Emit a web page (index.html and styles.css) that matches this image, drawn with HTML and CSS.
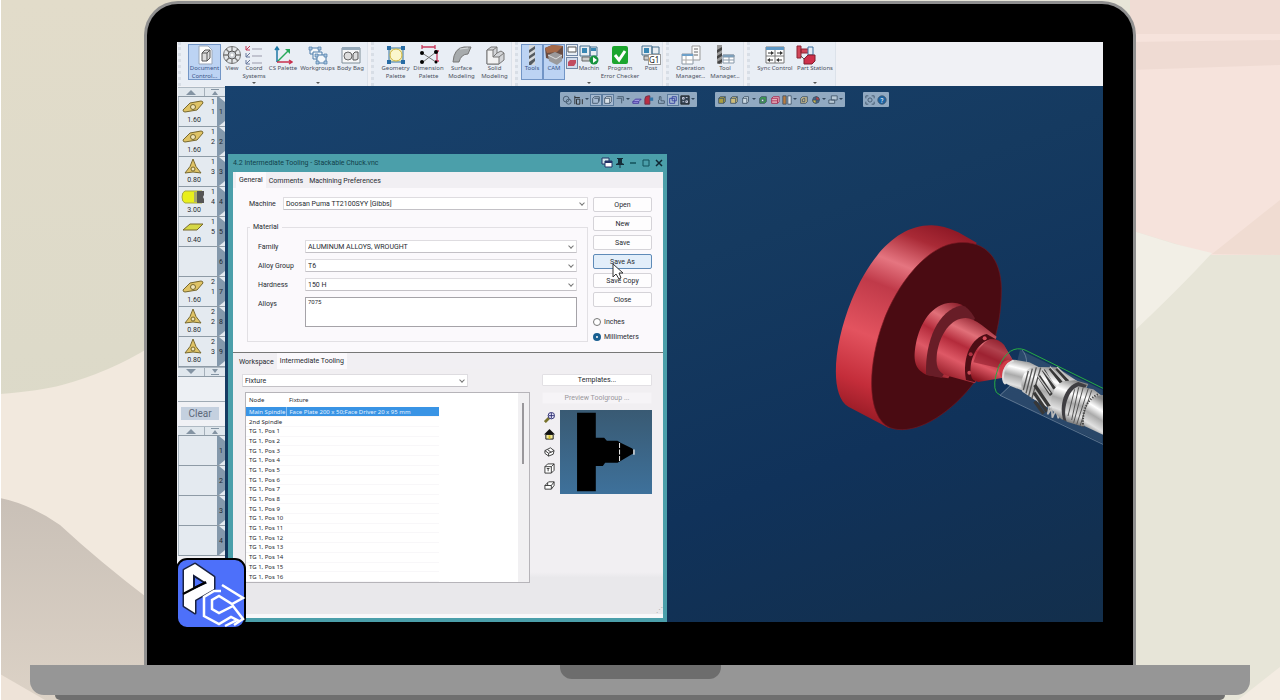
FILE: index.html
```html
<!DOCTYPE html>
<html lang="en">
<head>
<meta charset="utf-8">
<title>Intermediate Tooling</title>
<link rel="stylesheet" href="styles.css">
</head>
<body>
<svg class="backdrop" viewBox="0 0 1280 700" preserveAspectRatio="none" aria-hidden="true">
  <defs>
    <linearGradient id="olive" x1="0" y1="0" x2="0" y2="1"><stop offset="0" stop-color="#e2dcca"/><stop offset="1" stop-color="#d8d8c8"/></linearGradient>
    <linearGradient id="stone" x1="0" y1="0" x2="0" y2="1"><stop offset="0" stop-color="#c9c0b7"/><stop offset="1" stop-color="#dcd2c6"/></linearGradient>
  </defs>
  <rect width="640" height="700" fill="url(#olive)"/>
  <path d="M0 394 Q40 391 62 385 Q110 372 150 347 V620 H0Z" fill="#f2e9de"/>
  <path d="M0 498 Q30 504 60 525 Q100 562 150 600 V700 H0Z" fill="url(#stone)"/>
  <path d="M0 674 L45 700 H0Z" fill="#eee3d8"/>
  <rect width="1" height="700" fill="#fff"/>
  <rect x="640" width="640" height="700" fill="#e7e5d8"/>
  <path d="M1130 0H1280V255H1212L1130 230Z" fill="#f6e3dc"/>
  <path d="M1130 0H1280V34H1130Z" fill="#f0dcd4"/>
  <path d="M1130 42L1280 40V65L1130 70Z" fill="#efdbd3"/>
  <path d="M1212 254L1280 200V255Z" fill="#f0dcd2"/>
  <path d="M1130 230L1175 244L1212 253Q1180 288 1130 335Z" fill="#f2efe6"/>
  <path d="M1238 700L1280 667V700Z" fill="#f3ece2"/>
</svg>

<main class="laptop">
<div class="lid">
<div class="screen">

<header class="ribbon">
  <div class="group first">
    <button class="tool md on"><svg viewBox="0 0 20 20"><path d="M4 1h9l4 4v14H4z" fill="#fff" stroke="#9aa7b8"/><path d="M7 8l3-3h5v8l-3 3H7zM7 8h5v8M12 8l3-3" fill="#ddd" stroke="#555"/></svg><span>Document Control...</span></button>
    <button class="tool sm"><svg viewBox="0 0 20 20"><circle cx="10" cy="10" r="8.500" fill="#e4e7ea" stroke="#777"/><circle cx="10" cy="10" r="4" fill="#c9cdd2" stroke="#555"/><circle cx="10" cy="10" r="1.500" fill="#fff"/><path d="M10 1v5M10 14v5M1 10h5M14 10h5M4 4l3 3M16 4l-3 3M4 16l3-3M16 16l-3-3" stroke="#777" stroke-width="1.300"/></svg><span>View</span></button>
    <button class="tool sm drop"><svg viewBox="0 0 20 20"><path d="M2 1v4h4M2 5l4-4" stroke="#c33653" fill="none"/><path d="M2 8v4h4M2 12l4-4M2 15v4h4M2 19l4-4" stroke="#68799d" fill="none"/><path d="M8 4h10M8 11h10M8 18h10" stroke="#99a"/></svg><span>Coord<br>Systems</span></button>
    <button class="tool lg"><svg viewBox="0 0 20 20"><path d="M4 17L16 5" stroke="#27a85b" stroke-width="1.5"/><path d="M12 4h5v5z" fill="#27a85b"/><path d="M4 17V2M2 5l2-3 2 3" stroke="#1c77a5" fill="none" stroke-width="1.5"/><path d="M4 17h15M16 15l3 2-3 2" stroke="#c8314f" fill="none" stroke-width="1.5"/></svg><span>CS Palette</span></button>
    <button class="tool md drop"><svg viewBox="0 0 20 20" fill="#f5f8fb" stroke="#4d7caa"><path d="M2 3h9v6H2z"/><path d="M5 7h9v7H5z"/><path d="M9 10h9v8H9z" /><path d="M1 2h3v3H1zM10 2h3v3h-3zM7 9h3v3H7zM16 9h3v3h-3zM8 16h3v3H8zM16 16h3v3h-3z" fill="#a8c5df" stroke-width=".7"/></svg><span>Workgroups</span></button>
    <button class="tool md"><svg viewBox="0 0 20 20"><path d="M1 3h18v15H1z" fill="#f6f7f8" stroke="#7f8d98"/><path d="M1 2h18v3H1z" fill="#94a8b9"/><circle cx="7" cy="11" r="4" fill="#ddd" stroke="#666"/><path d="M12 9l2-2h3v7l-2 1h-3z" fill="#ddd" stroke="#555"/></svg><span>Body Bag</span></button>
  </div>
  <div class="group">
    <button class="tool md"><svg viewBox="0 0 20 20"><rect x="3" y="3" width="14" height="14" fill="#e3e5bf" stroke="#3976aa"/><circle cx="10" cy="10" r="6" fill="#fbf6cc" stroke="#d3b63b"/><path d="M1 1h4v4H1zM15 1h4v4h-4zM1 15h4v4H1zM15 15h4v4h-4z" fill="#286ca4"/></svg><span>Geometry Palette</span></button>
    <button class="tool md"><svg viewBox="0 0 20 20"><path d="M3 2h13M3 0v4M16 0v4M18 6v10M16 6h4M16 16h4" stroke="#c7385a" stroke-width="1.3"/><path d="M17 7L4 17M3 8L17 17" stroke="#777" fill="none"/><circle cx="17" cy="7" r="2"/><circle cx="3" cy="8" r="2"/><circle cx="3" cy="17" r="2"/><circle cx="17" cy="17" r="1.500"/></svg><span>Dimension Palette</span></button>
    <button class="tool md"><svg viewBox="0 0 20 20"><path d="M1 17Q2 3 12 2H19L16 9Q9 9 7 17Z" fill="#a7abad" stroke="#777"/><path d="M8 4L16 3" stroke="#d9dcdf"/></svg><span>Surface Modeling</span></button>
    <button class="tool md"><svg viewBox="0 0 20 20" stroke="#777"><path d="M2 5l4-3h6v6l4-2 3 2v7l-5 4H2z" fill="#d3d5d8"/><path d="M2 5h6v7h6v7H2zM8 5l4-3M14 12l5-4M8 12l4-4" fill="#f2f2f2"/></svg><span>Solid Modeling</span></button>
  </div>
  <div class="group tight">
    <button class="tool sm on"><svg viewBox="0 0 20 20"><path d="M7 0h6v20H7z" fill="#d5d8db"/><path d="M7 5l6-4v3l-6 4zM7 11l6-4v3l-6 4zM7 17l6-4v3l-4 4H7z" fill="#555b61"/></svg><span>Tools</span></button>
    <button class="tool sm on"><svg viewBox="0 0 20 20"><path d="M1 3l7-3 11 1v12l-5 4-12-4z" fill="#694c42"/><path d="M1 3l7-3 11 1-6 6-10 1z" fill="#a56949"/><path d="M4 10l7-3 7 3v6l-5 4-8-4z" fill="#9b9a9c"/><path d="M4 10l8 4 6-4" stroke="#ddd" fill="none"/></svg><span>CAM</span></button>
    <div class="mini">
      <button aria-label="Setup view"><svg viewBox="0 0 12 12"><rect x=".5" y=".5" width="11" height="11" fill="#e7edf4" stroke="#7187a6"/><path d="M2 3h8v5H2z" fill="#fff" stroke="#555"/></svg></button>
      <button aria-label="Part view"><svg viewBox="0 0 12 12"><rect x=".5" y=".5" width="11" height="11" fill="#d3dcec" stroke="#7187a6"/><path d="M2 5l2-2h6v3L8 9H2z" fill="#c24c60"/></svg></button>
    </div>
    <button class="tool sm drop"><svg viewBox="0 0 20 20"><path d="M1 1h10v10H1zM11 2h7v9h-7z" fill="#e8edf2" stroke="#46718f"/><path d="M3 3h5v5H3zM12 3h5v3h-5z" fill="#3987b4"/><path d="M3 12h8v4H3z" fill="#ccc" stroke="#666"/><circle cx="15" cy="15" r="4.500" fill="#17933e"/><path d="M14 12l4 3-4 3z" fill="#fff"/></svg><span>Machin</span></button>
    <button class="tool xl"><svg viewBox="0 0 20 20"><rect x="2" y="1" width="16" height="18" rx="2" fill="#1ba52e"/><path d="M5 10l4 5 6-9" stroke="#fff" stroke-width="3" fill="none"/></svg><span>Program<br>Error Checker</span></button>
    <button class="tool sm"><svg viewBox="0 0 20 20"><path d="M1 1h10v9H1zM11 2h7v7h-7z" fill="#e8edf2" stroke="#46718f"/><path d="M3 3h5v5H3z" fill="#3987b4"/><path d="M3 11h5v4H3z" fill="#ccc" stroke="#666"/><rect x="7.500" y="9.500" width="12" height="10" fill="#fff" stroke="#999"/><text x="8" y="18" font-size="8" fill="#222">G1</text></svg><span>Post</span></button>
  </div>
  <div class="group">
    <button class="tool md"><svg viewBox="0 0 20 20"><path d="M11 1h8v14h-8z" fill="#fafafa" stroke="#999"/><path d="M13 4h4M13 7h4M13 10h4" stroke="#666"/><path d="M1 9h11v10H1z" fill="#fff" stroke="#8a97a4"/><path d="M1 9h11v2H1z" fill="#6da0c9"/><path d="M5 11v8M1 15h11" stroke="#aaa"/></svg><span>Operation Manager...</span></button>
    <button class="tool lg"><svg viewBox="0 0 20 20"><path d="M2 0h5v19H2z" fill="#999"/><path d="M2 5l5-3v3l-5 3zM2 11l5-3v3l-5 3zM2 17l5-3v3l-3 2z" fill="#444"/><path d="M8 10h11v8H8z" fill="#fff" stroke="#89a"/><path d="M8 10h11v2H8zM14 12v6M8 15h11" stroke="#89a" fill="#71a4cb"/></svg><span>Tool<br>Manager...</span></button>
  </div>
  <div class="group">
    <button class="tool xl"><svg viewBox="0 0 20 20"><path d="M1 2h18v16H1z" fill="#fff" stroke="#777"/><path d="M1 2h18v3H1z" fill="#5f99c6"/><path d="M10 5v13M1 11h18" stroke="#777"/><path d="M3 8h4M12 8h4M4 15h4M13 15h4" stroke="#333"/><path d="M6 6l3 2-3 2zM15 6l3 2-3 2zM5 13l-3 2 3 2zM14 13l-3 2 3 2z" fill="#333"/></svg><span>Sync Control</span></button>
    <button class="tool xl drop stations"><svg viewBox="0 0 20 20"><path d="M1 1h4v12H1zM5 4h8v4H5z" fill="#d14658" stroke="#8d2434"/><path d="M12 2h5v8h-5z" fill="#e5ecf4" stroke="#3b70a0"/><path d="M8 14l4-4h7v6l-3 3H8z" fill="#cf304a" stroke="#7f1e2e"/><path d="M5 11l3 3" stroke="#555"/></svg><span>Part Stations</span></button>
  </div>
</header>

<div class="workspace">
  <aside class="rail">
    <div class="scroller"><button aria-label="Scroll up"><svg viewBox="0 0 12 6"><path d="M1 6l5-5 5 5z"/></svg></button><button aria-label="To top"><svg viewBox="0 0 12 6"><path d="M2 0h8v1H2zM3 6l3-4 3 4z"/></svg></button></div>
    <ol class="slots">
      <li><svg viewBox="0 0 24 16" class="insert"><path d="M2 11L9 4 20 2q2 0 2 2l-6 7-12 2q-2 0-2-2z"/><circle cx="12" cy="8" r="2.500"/></svg><b>1.60</b><i>1<br>1</i><em>1</em></li>
      <li><svg viewBox="0 0 24 16" class="insert"><path d="M2 11L9 4 20 2q2 0 2 2l-6 7-12 2q-2 0-2-2z"/><circle cx="12" cy="8" r="2.500"/></svg><b>1.60</b><i>1<br>2</i><em>2</em></li>
      <li><svg viewBox="0 0 24 16" class="insert"><path d="M12 0q2 8 8 14-8-2-16 0 6-6 8-14z"/><circle cx="12" cy="10" r="2"/></svg><b>0.80</b><i>1<br>3</i><em>3</em></li>
      <li><svg viewBox="0 0 24 16" class="insert"><path d="M4 2h17v12H4q-3-1-3-6t3-6z" fill="#e9ef1b" stroke="#a7aa42"/><path d="M16 2h7v4l-1 2 1 2v4h-7z" fill="#555" stroke="none"/><path d="M13 3h3v10h-3z" fill="#a9aa6f" stroke="none"/></svg><b>3.00</b><i>1<br>4</i><em>4</em></li>
      <li><svg viewBox="0 0 24 16" class="insert"><path d="M2 11l7-6h13l-6 6z" fill="#d5d745"/></svg><b>0.40</b><i>1<br>5</i><em>5</em></li>
      <li><em>6</em></li>
      <li><svg viewBox="0 0 24 16" class="insert"><path d="M2 11L9 4 20 2q2 0 2 2l-6 7-12 2q-2 0-2-2z"/><circle cx="12" cy="8" r="2.500"/></svg><b>1.60</b><i>2<br>1</i><em>7</em></li>
      <li><svg viewBox="0 0 24 16" class="insert"><path d="M12 0q2 8 8 14-8-2-16 0 6-6 8-14z"/><circle cx="12" cy="10" r="2"/></svg><b>0.80</b><i>2<br>2</i><em>8</em></li>
      <li><svg viewBox="0 0 24 16" class="insert"><path d="M12 0q2 8 8 14-8-2-16 0 6-6 8-14z"/><circle cx="12" cy="10" r="2"/></svg><b>0.80</b><i>2<br>3</i><em>9</em></li>
    </ol>
    <div class="scroller"><button aria-label="Scroll down"><svg viewBox="0 0 12 6"><path d="M1 0l5 5 5-5z"/></svg></button><button aria-label="To bottom"><svg viewBox="0 0 12 6"><path d="M2 5h8v1H2zM3 0l3 4 3-4z"/></svg></button></div>
    <div class="spare"></div>
    <div class="clear"><button>Clear</button></div>
    <div class="scroller"><button aria-label="Operations up"><svg viewBox="0 0 12 6"><path d="M1 6l5-5 5 5z"/></svg></button><button aria-label="Operations to top"><svg viewBox="0 0 12 6"><path d="M2 0h8v1H2zM3 6l3-4 3 4z"/></svg></button></div>
    <ol class="slots"><li><em>1</em></li><li><em>2</em></li><li><em>3</em></li><li><em>4</em></li></ol>
  </aside>

  <section class="canvas">
    <div class="floatbars">
      <div class="bar">
        <svg viewBox="0 0 12 12"><circle cx="5" cy="5" r="3.500"/><circle cx="8" cy="8" r="3"/></svg>
        <svg viewBox="0 0 12 12"><path d="M1 1v10M1 3h6M3 5h4v6H3zM10 5v6" stroke="#222"/></svg><s></s>
        <svg viewBox="0 0 12 12" class="sel"><path d="M2 4l2-2h6v5l-2 3H2zM4 4h5v4"/></svg>
        <svg viewBox="0 0 12 12" class="sel"><path d="M2 4l2-2h6v6l-2 2H2zM2 4h6v6" fill="#dce3ea"/></svg>
        <svg viewBox="0 0 12 12"><path d="M2 4h6v6M3 2h7v5"/></svg><s></s>
        <svg viewBox="0 0 12 12"><path d="M1 8l3-3h7L8 8zM1 8v2h7V8" fill="#a09ae0" stroke="#40309a"/></svg>
        <svg viewBox="0 0 12 12"><path d="M1 11V5q0-4 4-4h2v10z" fill="#b92d43" stroke="#67304a"/><path d="M7 3h4v4H7z" fill="#3474a7" stroke="none"/></svg>
        <svg viewBox="0 0 12 12"><path d="M3 6v4h7V7H6V2H4v4"/></svg>
        <svg viewBox="0 0 12 12" class="sel"><path d="M2 4h6v6H2zM5 2h5v5H5z" stroke="#303f9f"/></svg>
        <svg viewBox="0 0 12 12"><path d="M1 1h10v10H1z" fill="#344454" stroke="#222"/><path d="M3 3h2v2H3zM7 3h2M3 8h2M7 7h2v2H7z" stroke="#dde"/></svg><s></s>
      </div>
      <div class="bar">
        <svg viewBox="0 0 12 12"><path d="M2 4l2-2h6v6l-2 2H2z" fill="#a99d43"/><path d="M2 4h6v6M8 4l2-2"/></svg>
        <svg viewBox="0 0 12 12"><path d="M2 4l2-2h6v6l-2 2H2z" fill="#cdbd7b"/><path d="M2 4h6v6M8 4l2-2"/></svg>
        <svg viewBox="0 0 12 12"><path d="M2 4l2-2h5v6l-2 2H2zM2 4h5v6" fill="#cbd9e3"/></svg><s></s>
        <svg viewBox="0 0 12 12"><path d="M2 4l2-2h6v6l-2 2H2z" fill="#3d9b51"/><path d="M4 5h3v3H4z" fill="#dfe"/></svg>
        <svg viewBox="0 0 12 12"><path d="M2 4l2-2h7v6l-2 2H2zM2 4h7v6M2 7h7" fill="#e4b1bd" stroke="#a7274d"/></svg>
        <svg viewBox="0 0 12 12"><path d="M1 1h4v10H1z" fill="#b87c41"/><path d="M7 1h4v10H7z" fill="#dce5ee"/></svg><s></s>
        <svg viewBox="0 0 12 12"><path d="M2 4l2-2h6v6l-2 2H2zM4 5l3-1v4H4z" fill="#c5b78b"/></svg>
        <svg viewBox="0 0 12 12"><circle cx="6" cy="6" r="4" fill="#45658a"/><path d="M6 2a4 4 0 0 1 4 4H6z" fill="#c54043"/><path d="M2 6h4v4a4 4 0 0 1-4-4z" fill="#d0b94a"/></svg><s></s>
        <svg viewBox="0 0 12 12"><path d="M4 1h7v5H4zM1 6h7v4H1z" fill="#b8c9d6"/></svg><s></s>
      </div>
      <div class="bar">
        <svg viewBox="0 0 12 12"><path d="M1 4V1h3M8 1h3v3M11 8v3H8M4 11H1V8"/><circle cx="6" cy="6" r="2.500"/></svg>
        <svg viewBox="0 0 12 12"><circle cx="6" cy="6" r="5" fill="#1b64a5"/><text x="4" y="9" font-size="8" fill="#fff" stroke="none">?</text></svg>
      </div>
    </div>

    <svg class="model" viewBox="0 0 849 750" role="img" aria-label="Red stackable chuck with shaft">
      <defs>
        <linearGradient id="rim" gradientUnits="userSpaceOnUse" x1="350" y1="40" x2="110" y2="640"><stop offset="0" stop-color="#8f1926"/><stop offset=".1" stop-color="#a92a36"/><stop offset=".24" stop-color="#e57580"/><stop offset=".36" stop-color="#c03a49"/><stop offset=".6" stop-color="#e3535f"/><stop offset=".82" stop-color="#c42d3a"/><stop offset="1" stop-color="#8e1721"/></linearGradient>
        <linearGradient id="hub" x1=".7" y1="0" x2=".25" y2="1"><stop offset="0" stop-color="#8d202c"/><stop offset=".25" stop-color="#e17079"/><stop offset=".45" stop-color="#b42b3b"/><stop offset=".68" stop-color="#de5966"/><stop offset="1" stop-color="#8c1621"/></linearGradient>
        <linearGradient id="steel" x1=".6" y1="0" x2=".3" y2="1"><stop offset="0" stop-color="#888"/><stop offset=".28" stop-color="#fff"/><stop offset=".5" stop-color="#aaa"/><stop offset=".75" stop-color="#e2e2e2"/><stop offset="1" stop-color="#666"/></linearGradient>
      </defs>
      <path d="M335 46C225 45 145 150 95 270C40 405 28 555 85 590L205 653L250 658L470 98L415 67Q370 46 335 46Z" fill="url(#rim)"/>
      <path d="M415 98C320 105 230 225 190 335C145 455 135 620 210 653C270 675 360 635 440 545C500 478 545 370 544 235C543 150 500 91 415 98Z" fill="#4a0b12" stroke="#721720" stroke-width="2"/>
      <path d="M395 278C335 280 300 340 288 400C276 460 290 480 320 495L385 505L470 345L425 284Q410 277 395 278Z" fill="url(#hub)"/>
      <path d="M425 286C355 301 315 390 318 494L365 504L465 325Q445 290 425 286Z" fill="#681d27"/>
      <path d="M430 325C385 330 355 385 350 440C347 475 360 491 385 498L465 520L530 380L485 345Q450 320 430 325Z" fill="url(#hub)"/>
      <path d="M500 372C455 383 425 440 438 510L465 517L528 388Z" fill="#4d0d15"/>
      <circle cx="494" cy="385" r="6" fill="#d54d5b"/><circle cx="452" cy="433" r="6" fill="#ad3141"/><circle cx="448" cy="488" r="6" fill="#c84955"/>
      <path d="M510 388C470 400 446 450 453 495Q455 512 475 516L550 503L583 458L552 405Q535 385 510 388Z" fill="url(#hub)"/>
      <path d="M510 388Q530 380 552 405L583 458Q552 440 536 474L460 457Q475 405 510 388Z" fill="#8b1c29" opacity=".55"/>
      <path d="M583 458L549 503Q534 500 540 475Q550 453 565 450Z" fill="#d13a47"/>
      <path d="M600 420L575 520L540 556L848 700V540Z" fill="#788b9e" opacity=".25"/>
      <path d="M606 420Q620 435 620 460M540 556L578 520M540 556L849 703" stroke="#8295ab" stroke-width="2" fill="none"/>
      <path d="M584 449C555 455 540 490 550 517L570 527L634 553L668 477L628 457Z" fill="url(#steel)"/>
      <path d="M581 451Q549 466 549 500Q549 516 557 522" stroke="#ddd" stroke-width="6" fill="none"/>
      <path d="M646 471C614 470 598 510 607 545L660 580L735 620L775 515L709 472Z" fill="url(#steel)"/>
      <path d="M625 483L610 540M637 476L618 550M649 472L626 558M662 473L635 567" stroke="#555" stroke-width="4"/>
      <path d="M656 498L694 555M670 480L704 536M690 475L729 524M710 475L744 514M644 525L688 590M642 548L681 605M644 574L671 611" stroke="#383838" stroke-width="10"/>
      <path d="M650 493L691 550M667 477L709 532M690 470L734 518M711 471L747 508" stroke="#c8c8c8" stroke-width="4"/>
      <path d="M688 588l-5 25 12-18 2 28 11-25 7 27 5-26 10 20" fill="none" stroke="#b9b9b9" stroke-width="5"/>
      <path d="M735 513C700 520 686 575 696 600L724 628L750 635L805 522L765 511Z" fill="url(#steel)"/>
      <path d="M775 516C732 528 716 589 730 630L749 637L800 525Z" fill="#3f3e42"/>
      <path d="M775 529C742 540 727 605 740 635L790 650L849 560L820 538Z" fill="url(#steel)"/>
      <path d="M764 538L744 618M776 532L755 630M790 531L761 638M805 535L770 644M815 541L780 648" stroke="#555" stroke-width="3"/>
      <path d="M849 555C808 556 786 600 793 648L849 674Z" fill="url(#steel)"/>
      <path d="M834 553Q785 575 789 650" stroke="#444" stroke-width="6" stroke-dasharray="4 4" fill="none"/>
      <path d="M849 535L615 420Q568 402 536 470Q516 524 529 547L540 555" stroke="#27ad43" stroke-width="3" fill="none"/>
    </svg>

    <section class="dialog" aria-label="Intermediate Tooling">
      <header class="title"><h1>4.2 Intermediate Tooling - Stackable Chuck.vnc</h1>
        <svg viewBox="0 0 12 12"><path d="M1 1h7v6H1z" fill="#cce4e8" stroke="#236"/><path d="M4 4h7v6H4z" fill="#fff" stroke="#236"/><path d="M4 4h7v2H4z" fill="#236"/></svg>
        <svg viewBox="0 0 12 12"><path d="M3 1h6v1H8v4l2 1v1H6.500v3h-1V8H2V7l2-1V2H3z" fill="#142c38"/></svg>
        <button aria-label="Minimize"><svg viewBox="0 0 12 12"><path d="M3 6h6" stroke="#12515a" stroke-width="1.500"/></svg></button>
        <button aria-label="Maximize"><svg viewBox="0 0 12 12"><path d="M3 3h6v6H3z" fill="none" stroke="#12515a"/></svg></button>
        <button aria-label="Close dialog"><svg viewBox="0 0 12 12"><path d="M3 3l6 6M9 3l-6 6" stroke="#102733" stroke-width="1.500"/></svg></button>
      </header>
      <div class="pane">
        <nav class="tabs"><button class="active">General</button><button>Comments</button><button>Machining Preferences</button></nav>
        <form class="general">
          <div class="fields">
            <div class="field machine"><label for="machine">Machine</label><div class="pick"><select id="machine"><option>Doosan Puma TT2100SYY [Gibbs]</option></select></div></div>
            <fieldset><legend>Material</legend>
              <div class="field"><label for="family">Family</label><div class="pick"><select id="family"><option>ALUMINUM ALLOYS, WROUGHT</option></select></div></div>
              <div class="field"><label for="group">Alloy Group</label><div class="pick"><select id="group"><option>T6</option></select></div></div>
              <div class="field"><label for="hard">Hardness</label><div class="pick"><select id="hard"><option>150 H</option></select></div></div>
              <div class="field tall"><label for="alloys">Alloys</label><textarea id="alloys">7075</textarea></div>
            </fieldset>
          </div>
          <div class="actions">
            <button type="button">Open</button><button type="button">New</button><button type="button">Save</button>
            <button type="button" class="hover">Save As<svg class="pointer" viewBox="0 0 11 17"><path d="M1 1v13l3-3 3 5 2-1-2-5h4z" fill="#fff" stroke="#333"/></svg></button>
            <button type="button">Save Copy</button><button type="button">Close</button>
            <label class="unit"><input type="radio" name="unit">Inches</label>
            <label class="unit"><input type="radio" name="unit" checked>Millimeters</label>
          </div>
        </form>
        <div class="lower">
          <nav class="tabs"><button>Workspace</button><button class="active">Intermediate Tooling</button></nav>
          <div class="tooling">
            <div class="nodes">
              <div class="pick"><select aria-label="Node type"><option>Fixture</option></select></div>
              <div class="list">
                <table>
                  <thead><tr><th>Node</th><th>Fixture</th><th class="rest"></th></tr></thead>
                  <tbody>
                    <tr class="picked"><td>Main Spindle</td><td>Face Plate 200 x 50;Face Driver 20 x 95 mm</td></tr>
                    <tr><td>2nd Spindle</td><td></td></tr>
                    <tr><td>TG 1, Pos 1</td><td></td></tr>
                    <tr><td>TG 1, Pos 2</td><td></td></tr>
                    <tr><td>TG 1, Pos 3</td><td></td></tr>
                    <tr><td>TG 1, Pos 4</td><td></td></tr>
                    <tr><td>TG 1, Pos 5</td><td></td></tr>
                    <tr><td>TG 1, Pos 6</td><td></td></tr>
                    <tr><td>TG 1, Pos 7</td><td></td></tr>
                    <tr><td>TG 1, Pos 8</td><td></td></tr>
                    <tr><td>TG 1, Pos 9</td><td></td></tr>
                    <tr><td>TG 1, Pos 10</td><td></td></tr>
                    <tr><td>TG 1, Pos 11</td><td></td></tr>
                    <tr><td>TG 1, Pos 12</td><td></td></tr>
                    <tr><td>TG 1, Pos 13</td><td></td></tr>
                    <tr><td>TG 1, Pos 14</td><td></td></tr>
                    <tr><td>TG 1, Pos 15</td><td></td></tr>
                    <tr><td>TG 1, Pos 16</td><td></td></tr>
                  </tbody>
                </table>
                <div class="track"><div class="thumb"></div></div>
              </div>
            </div>
            <div class="preview">
              <button class="wide">Templates...</button>
              <button class="wide" disabled>Preview Toolgroup ...</button>
              <div class="view">
                <div class="viewtools">
                  <button aria-label="Zoom"><svg viewBox="0 0 12 12"><path d="M1 11l5-5" stroke="#78722c" stroke-width="3"/><circle cx="8" cy="4" r="3.500" fill="#eef" stroke="#29296d"/><path d="M8 1v6M5 4h6" stroke="#29296d"/></svg></button>
                  <button aria-label="Home"><svg viewBox="0 0 12 12"><path d="M0 6l6-6 6 6z" fill="#111"/><path d="M2 6h8v5H2z" fill="#f0e9a1" stroke="#111"/><path d="M5 7h2v4H5z" fill="#d6bd27"/></svg></button>
                  <button aria-label="Isometric"><svg viewBox="0 0 12 12" fill="#fff" stroke="#333"><path d="M1 5l6-3 4 3-1 4-5 2-4-3zM1 5l4 3 6-3M5 8v3M4 4l4 3"/></svg></button>
                  <button aria-label="Top view"><svg viewBox="0 0 12 12" fill="#fff" stroke="#333"><path d="M1 4l3-3h7v7l-3 3H1zM1 4h7v7M8 4l3-3M3 6h3M4.500 6v3"/></svg></button>
                  <button aria-label="Front view"><svg viewBox="0 0 12 12" fill="#fff" stroke="#333"><path d="M1 6l4-4h6v4l-3 4H1zM1 6h7v4M8 6l3-4M4 3v3"/></svg></button>
                </div>
                <svg class="thumbnail" viewBox="0 0 275 249" preserveAspectRatio="none"><defs><linearGradient id="sky" x1="0" y1="0" x2="0" y2="1"><stop offset="0" stop-color="#395a73"/><stop offset="1" stop-color="#3e719b"/></linearGradient></defs><rect width="275" height="249" fill="url(#sky)"/><path d="M51 8h56v74h25l8 9h32l9 6 35 17 4 5v9l-39 23-9 5h-37l-7 10h-21v75H51z"/><path d="M178 98v55" stroke="#eee" stroke-width="3" stroke-dasharray="15 4"/><path d="M221 117v16" stroke="#eee" stroke-width="4"/></svg>
              </div>
            </div>
          </div>
          <div class="resize">⋰</div>
        </div>
      </div>
    </section>
  </section>
</div>

<svg class="badge" viewBox="0 0 70 71" role="img" aria-label="PC logo">
  <rect x="1" y="1" width="68" height="69" rx="10" fill="#4d70fa" stroke="#000" stroke-width="2"/>
  <path d="M8 12L19 6L38 19V31L19 42V55L8 48Z" fill="#fff" stroke="#1b2340" stroke-width="3" stroke-linejoin="round" paint-order="stroke"/>
  <path d="M18 18L29 25L18 30Z" fill="#4d70fa" stroke="#111a38" stroke-width="2"/>
  <path d="M7 36L30 24" stroke="#000" stroke-width="2"/>
  <path d="M46 27L67 40L56 46L43 38L36 42V51L43 55L57 48L67 61L58 67M45 33L38 33L28 39V58L43 66L55 59L61 62L49 68" fill="none" stroke="#fff" stroke-width="2.500"/>
</svg>
</div>
</div>
<div class="deck"><div class="notch"></div></div>
<div class="foot"></div>
</main>
</body>
</html>
```

FILE: styles.css
```css
* { box-sizing: border-box; }
body { margin: 0; font-family: Roboto, "Noto Sans", sans-serif; font-size: 7px; line-height: 8px; color: #262a30; overflow: hidden; }
button, select, textarea, input { font: inherit; color: inherit; margin: 0; }
button { border: 0; background: none; padding: 0; }
svg { display: block; }
.backdrop { position: absolute; z-index: -1; inset: 0; width: 100%; height: 100%; }

.laptop { height: 100vh; display: flex; flex-direction: column; padding-top: 1px; }
.lid { flex: 1; min-height: 0; margin: 0 144px; padding: 38px 30px 43px; border: 3px solid #8f8f8f; border-bottom: 0; border-radius: 34px 34px 0 0; background: #000; display: flex; }
.deck { height: 30px; margin: 0 30px; background: #969696; border-radius: 0 0 14px 14px; }
.notch { width: 161px; height: 14px; margin: 0 auto; background: #6d6d6d; border-radius: 0 0 12px 12px; }
.foot { height: 5px; margin: 0 55px; background: #6f6f6f; border-radius: 0 0 14px 14px; }

.screen { position: relative; flex: 1; min-width: 0; display: flex; flex-direction: column; background: #f0f1f5; }

.ribbon { height: 44px; flex: none; display: flex; background: #f0f1f5; font-family: "Noto Sans", sans-serif; font-size: 6px; }
.group { display: flex; padding: 2px 0 0 5px; margin-right: 3px; background: #e9eef5; border-right: 1px solid #dce2ea; border-left: 3px dotted #d8dee6; }
.group.first { margin-left: 1px; padding-left: 7px; }
.group.tight { padding-left: 3px; }
.tool { position: relative; display: flex; flex-direction: column; align-items: center; height: 37px; padding-top: 1px; color: #4a5060; white-space: nowrap; }
.tool > svg { width: 20px; height: 20px; flex: none; margin-bottom: -1px; }
.tool span { text-align: center; }
.tool.sm { width: 22px; }
.tool.md { width: 33px; }
.tool.md span { white-space: normal; }
.tool.lg { width: 36px; }
.tool.xl { width: 40px; }
.tool.on { background: #bcd3f3; border: 1px solid #7295c6; height: 36px; padding-top: 0; color: #3a5388; }
.tool.drop::after { content: ""; position: absolute; bottom: -5px; border: 2px solid transparent; border-top-color: #555; }
.stations > svg { margin-right: 18px; }
.mini { width: 13px; display: flex; flex-direction: column; gap: 1px; }
.mini svg { width: 12px; height: 12px; margin-left: 1px; }

.workspace { flex: 1; min-height: 0; display: flex; }
.rail { width: 48px; flex: none; padding: 1px 0 0 1px; background: #f0f1f5; overflow: hidden; }
.scroller { display: flex; height: 10px; background: #e0e7ed; border-bottom: 1px solid #8e9ba6; border-top: 1px solid #aeb9c3; }
.scroller button { width: 27px; display: flex; justify-content: center; align-items: center; border-right: 1px solid #a5b0ba; }
.scroller button + button { width: 20px; border: 0; }
.scroller svg { width: 12px; height: 6px; fill: #8494a3; }
.slots { margin: 0; padding: 0; list-style: none; }
.slots li { height: 30px; display: grid; grid-template: 19px 10px / 30px 8px 8px; background: #e4eaf0; border-bottom: 1px solid #8e9ba6; border-left: 1px solid #aab6c0; text-align: center; }
.slots b { grid-area: 2 / 1; font-weight: 400; }
.slots i { grid-area: 1 / 2; font-style: normal; line-height: 10px; }
.slots em { grid-area: 1 / 3 / 3 / 4; font-style: normal; line-height: 30px; background: #8398ab; clip-path: polygon(0 0, 25% 0, 100% 17%, 100% 83%, 25% 100%, 0 100%); }
.insert { grid-area: 1 / 1; width: 24px; height: 16px; margin: 2px; fill: #dfc366; stroke: #78682c; }
.insert circle { fill: #eee4b8; }
.spare { height: 25px; border-bottom: 1px solid #9faab4; background: #edf0f4; }
.clear { padding: 5px 6px 5px 3px; height: 24px; }
.clear button { width: 100%; height: 13px; background: #c4d0df; font-size: 10px; line-height: 13px; color: #5c6878; }

.canvas { position: relative; flex: 1; min-width: 0; overflow: hidden; background: linear-gradient(160deg, #18426e 0%, #153a60 40%, #10325a 70%, #132f4c 100%); }
.floatbars { display: flex; gap: 18px; padding: 6px 0 0 335px; }
.bar { display: flex; align-items: center; height: 15px; padding: 0 1px; background: #91a9c1; border-radius: 1px; }
.bar svg { width: 12px; height: 12px; padding: 1px; fill: none; stroke: #3e5368; }
.bar .sel { background: #a5b9d1; outline: 1px solid #5c7c9e; outline-offset: -1px; }
.bar s { border: 2px solid transparent; border-top-color: #31475d; width: 4px; height: 2px; margin-right: 1px; }
.model { position: absolute; right: 0; top: 124px; width: 283px; height: 250px; }

.dialog { position: absolute; left: 3px; top: 68px; bottom: 0; width: 439px; padding: 0 4px 4px 5px; background: #4b9faa; display: flex; flex-direction: column; }
.title { display: flex; align-items: center; height: 18px; flex: none; margin-right: -2px; color: #123f4a; }
.title h1 { flex: 1; margin: 0; font-size: 7px; font-weight: 400; }
.title svg { width: 12px; height: 12px; margin-left: 1px; }
.pane { flex: 1; min-height: 0; display: flex; flex-direction: column; background: #fbf9fc; }
.tabs { display: flex; align-items: center; height: 16px; padding-left: 3px; background: #f1eff3; flex: none; }
.tabs button { height: 16px; padding: 2px 3px 0; }
.tabs .active { padding-top: 0; background: #fbf9fc; }
.general { display: flex; flex: none; height: 164px; padding: 9px 11px 0 14px; gap: 5px; }
.fields { flex: 1; }
.field { display: flex; align-items: center; height: 13px; margin-bottom: 6px; }
.field label { width: 47px; flex: none; }
.pick { position: relative; flex: 1; display: flex; }
.pick::after { content: ""; position: absolute; right: 4px; top: 4px; width: 3px; height: 3px; border: solid #777; border-width: 0 1px 1px 0; transform: rotate(45deg); pointer-events: none; }
select { appearance: none; flex: 1; height: 13px; padding: 0 2px; border: 1px solid #dedce0; border-bottom-color: #c3c1c6; border-radius: 1px; color: #262a30; background: #fff; }
.machine { padding-left: 2px; margin-bottom: 13px; }
.machine label { width: 34px; }
fieldset { margin: 0; height: 119px; padding: 9px 10px 0; border: 1px solid #e2e0e4; min-width: 0; }
legend { padding: 0 3px; margin-left: -8px; line-height: 8px; }
.field.tall { height: 30px; align-items: flex-start; }
.tall label { padding-top: 3px; }
textarea { flex: 1; height: 30px; padding: 0 2px; border: 1px solid #a5a3a8; background: #fff; resize: none; font-size: 6px; overflow: hidden; }
.actions { width: 59px; display: flex; flex-direction: column; gap: 4px; }
.actions button { position: relative; height: 15px; flex: none; border: 1px solid #d5d3d8; border-radius: 2px; background: #fefdfe; }
.actions .hover { background: #e2eefa; border-color: #5f8bb8; }
.pointer { position: absolute; z-index: 2; left: 18px; top: 8px; width: 11px; height: 17px; }
.unit { display: flex; align-items: center; gap: 3px; height: 11px; }
.unit:first-of-type { margin-top: 5px; }
input[type="radio"] { appearance: none; width: 8px; height: 8px; border: 1px solid #777; border-radius: 50%; background: #fff; }
input[type="radio"]:checked { border: 3px solid #195f91; }

.lower { flex: 1; min-height: 0; display: flex; flex-direction: column; border-top: 1px solid #777; background: linear-gradient(#f1eff2 0 84%, #e9e8eb 86%); border-bottom: 4px solid #f8f8fa; }
.tooling { display: flex; justify-content: space-between; padding: 5px 11px 0 9px; }
.nodes { width: 288px; }
.nodes > .pick { width: 226px; }
.list { display: flex; height: 191px; margin: 5px 0 0 3px; border: 1px solid #b6b4b9; background: #fff; }
table { flex: 1; border-collapse: collapse; table-layout: fixed; font-family: "Noto Sans", sans-serif; font-size: 6px; line-height: 8px; height: 189px; }
th { width: 40px; height: 14px; padding: 0 0 0 3px; font-weight: 400; text-align: left; }
th + th { width: 153px; }
th.rest { width: auto; }
td { height: 9px; padding: 0 0 0 3px; white-space: nowrap; border-bottom: 1px solid #f8f7f9; }
.picked td { background: #3994e5; color: #e5f2ff; }
.picked td + td { border-left: 1px solid #8dc3f0; }
.track { width: 11px; background: #f1f0f2; padding: 10px 4px 0; }
.thumb { width: 2px; height: 61px; background: #99979b; }
.preview { width: 110px; display: flex; flex-direction: column; gap: 6px; }
.wide { height: 12px; background: #fff; border: 1px solid #e2e0e4; border-radius: 1px; }
.wide:disabled { color: #99979c; background: #f6f4f7; border-color: #f3f1f4; }
.view { display: flex; justify-content: space-between; }
.viewtools { display: flex; flex-direction: column; gap: 6px; padding: 2px 0 0 2px; }
.viewtools svg { width: 11px; height: 11px; }
.thumbnail { width: 92px; height: 84px; }
.resize { margin-top: auto; align-self: flex-end; color: #aaa; }
.badge { position: absolute; left: -1px; bottom: -7px; width: 70px; height: 71px; }
```
